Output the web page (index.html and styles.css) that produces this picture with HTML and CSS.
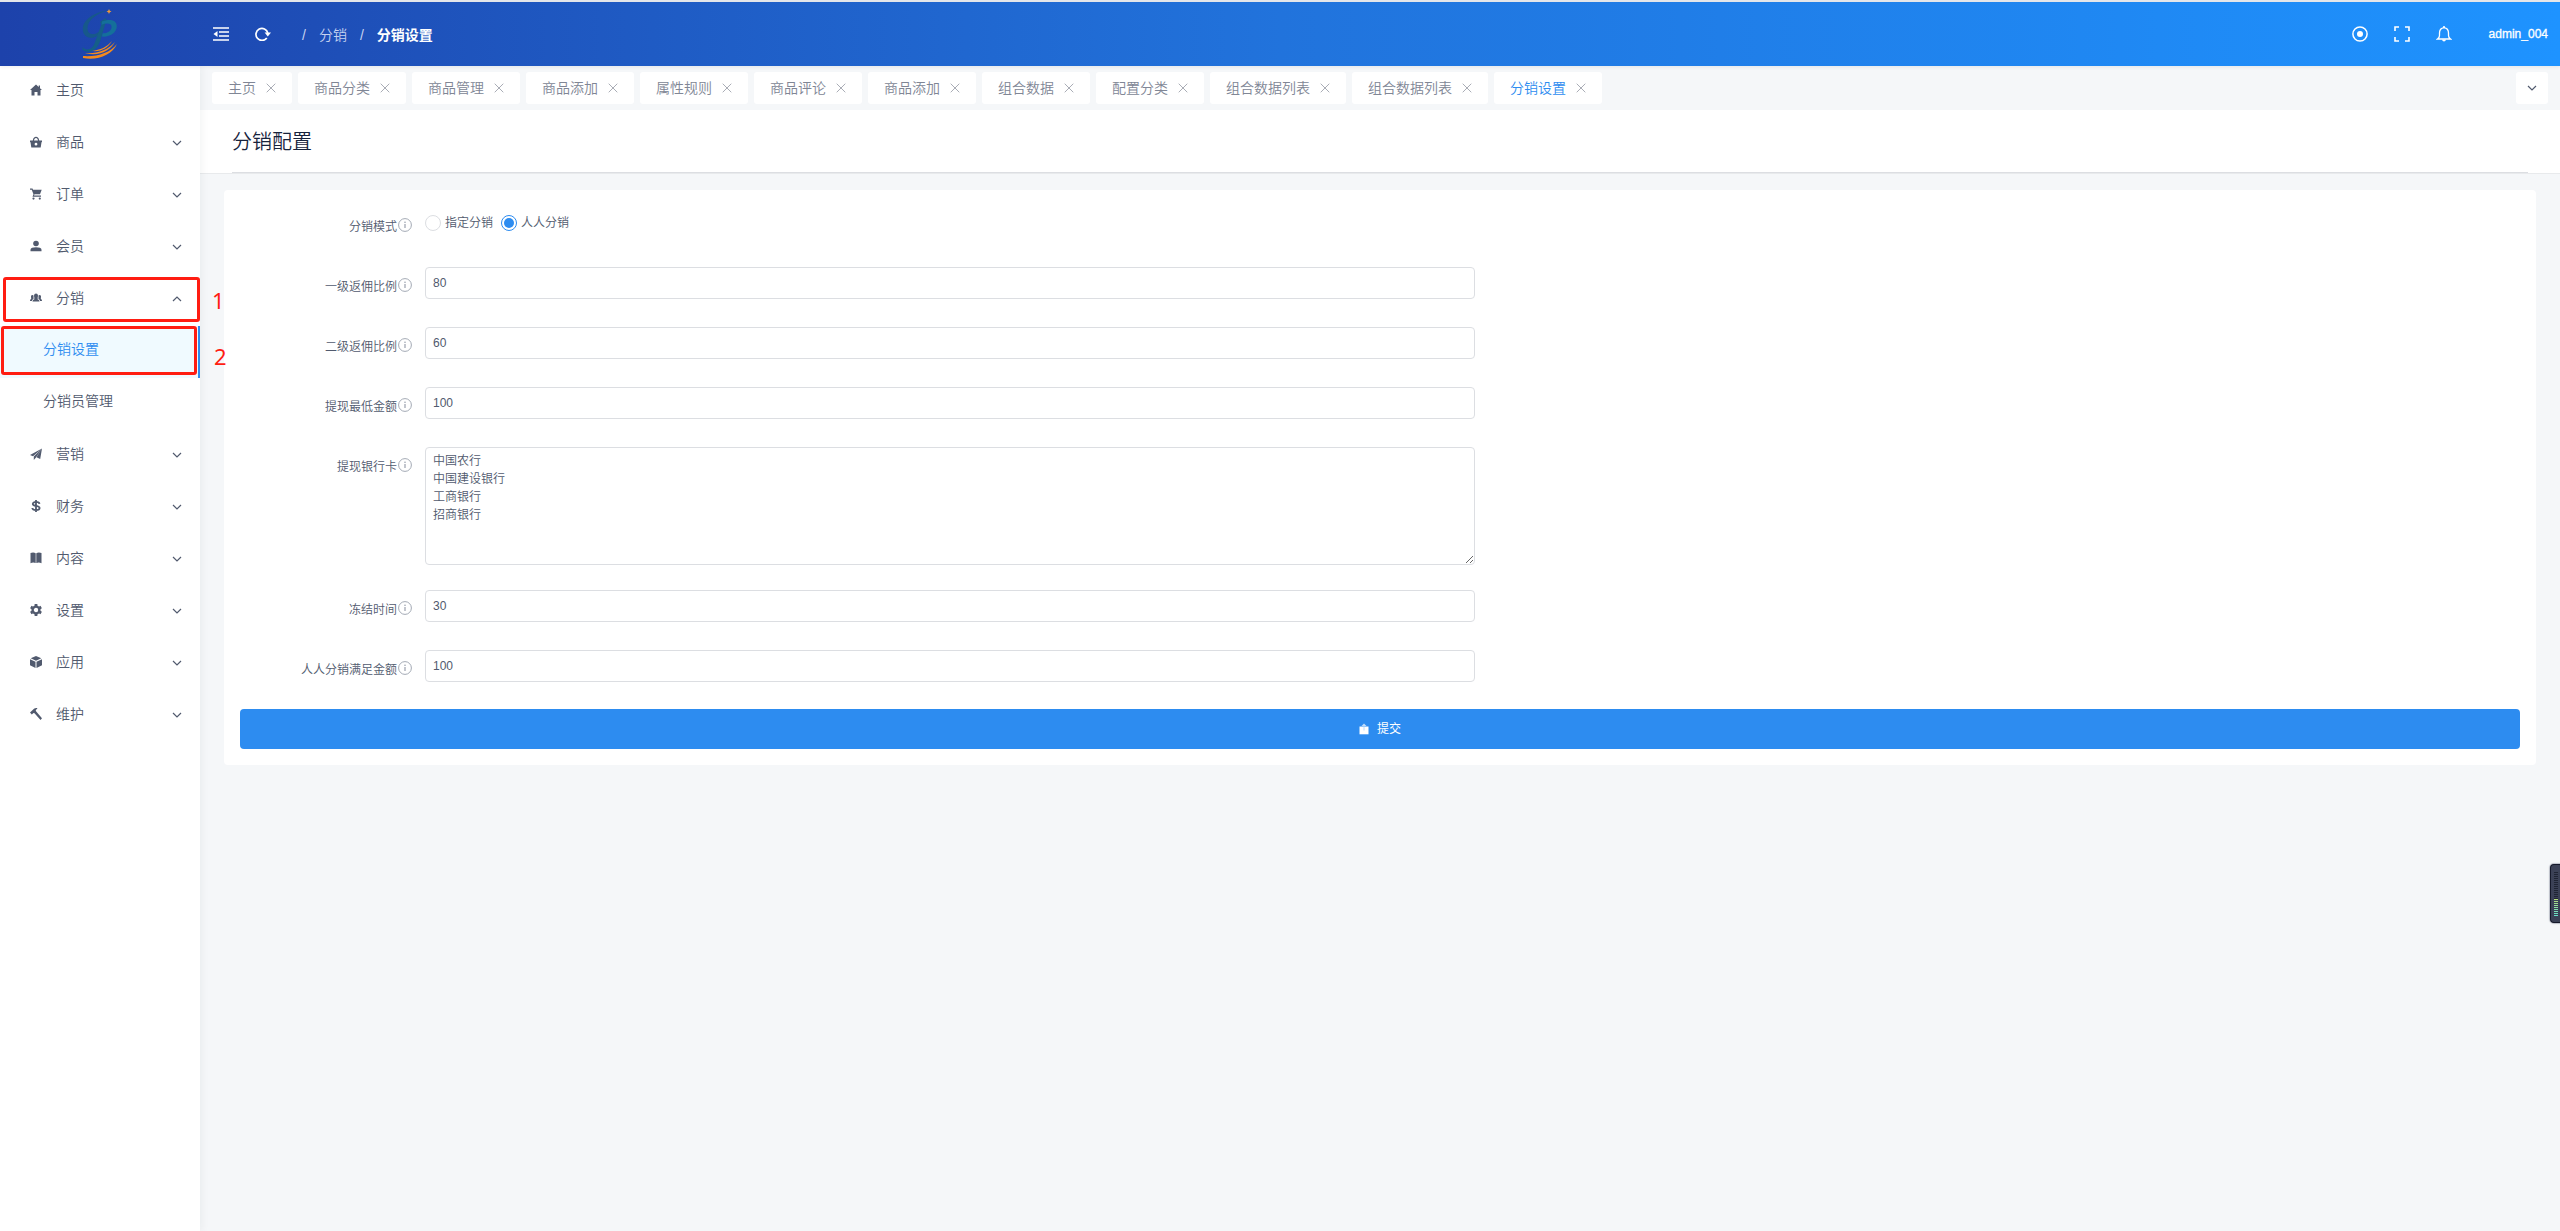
FILE: index.html
```html
<!DOCTYPE html>
<html lang="zh-CN">
<head>
<meta charset="utf-8">
<meta name="viewport" content="width=device-width, initial-scale=1">
<title>分销配置</title>
<link rel="stylesheet" href="styles.css">
</head>
<body>
<svg class="sprite" aria-hidden="true">
  <symbol id="down" viewBox="0 0 10 10"><path d="M1 3l4 4 4-4" fill="none" stroke="currentColor" stroke-width="1.2"/></symbol>
  <symbol id="up" viewBox="0 0 10 10"><path d="M1 7l4-4 4 4" fill="none" stroke="currentColor" stroke-width="1.2"/></symbol>
  <symbol id="close" viewBox="0 0 10 10"><path d="M.7.7l8.6 8.6M9.3.7L.7 9.3" fill="none" stroke="currentColor" stroke-width="1"/></symbol>
  <symbol id="info" viewBox="0 0 14 14"><circle cx="7" cy="7" r="6.4" fill="none" stroke="currentColor" stroke-width=".9"/><path d="M7 6v4" fill="none" stroke="currentColor" stroke-width="1.2"/><circle cx="7" cy="4.2" r=".8" fill="currentColor"/></symbol>
</svg>
<header class="header">
  <a class="logo" href="#" aria-label="首页">
    <svg width="36" height="50" viewBox="0 0 36 50">
      <path d="M26 1.500C12 3 .5 11 .8 20.500 1 29.500 11 31 16.500 26l.8-3.500C12.500 26.500 5.500 26 5.500 19.500 5.500 11.500 14 4.500 26 1.500z" fill="#17588a"/>
      <path d="M18 13l5.500-4c1.200 1 .8 2.500.3 4L18.500 31c-3 9.500-9 13-14.500 11.500-3-.8-4-2.500-3.500-4.500 2.500 3.500 9 4 12-3.500L19.500 15z" fill="#155f88"/>
      <path d="M20 12.500c6-2.500 14.500-2.500 14.800 4.500.2 7-8 11.500-15 10.500l1-3.200c5.500.2 9-3.300 8.800-6.800-.2-3.500-5.100-3.500-10.100-1.800z" fill="#14709a"/>
      <path d="M27 0l.8 1.700 1.700.8-1.700.8L27 5l-.8-1.700-1.700-.8 1.700-.8z" fill="#f09a3a"/>
      <path d="M3 44c12 1 23-3 30-11-5 9-17 15-30 11zM1 47c14 1 27-3 34-12-5 11-20 17-34 14zM10 42c8-1 15-4 20-10-4 7-11 11-20 10z" fill="#f28a1e"/>
    </svg>
  </a>
  <button class="head-btn" type="button" aria-label="折叠菜单"><svg width="16" height="14" viewBox="0 0 16 14"><path d="M0 1h16M6 5h10M6 9h10M0 13h16" stroke="currentColor" stroke-width="1.6"/><path d="M4.5 4v6L.5 7z" fill="currentColor"/></svg></button>
  <button class="head-btn" type="button" aria-label="刷新"><svg width="16" height="14" viewBox="0 0 16 14"><path d="M11.800 11A6 6 0 1 1 12.800 6" fill="none" stroke="currentColor" stroke-width="1.7"/><path d="M9.600 5.500h6.400l-3.200 4z" fill="currentColor"/></svg></button>
  <nav class="crumbs" aria-label="面包屑"><span>/</span><a href="#">分销</a><span>/</span><strong>分销设置</strong></nav>
  <div class="head-right">
    <button class="head-btn" type="button" aria-label="主题"><svg width="16" height="16" viewBox="0 0 16 16"><circle cx="8" cy="8" r="7.1" fill="none" stroke="currentColor" stroke-width="1.5"/><circle cx="8" cy="8" r="3" fill="currentColor"/></svg></button>
    <button class="head-btn" type="button" aria-label="全屏"><svg width="16" height="16" viewBox="0 0 16 16"><path d="M1 5V1h4M11 1h4v4M15 11v4h-4M5 15H1v-4" fill="none" stroke="currentColor" stroke-width="1.6"/></svg></button>
    <button class="head-btn" type="button" aria-label="通知"><svg width="16" height="16" viewBox="0 0 16 16"><path d="M1.500 13h13c-1.400-1-2-2-2-3.500V7c0-3-1.700-5-4.500-5.400C5.200 2 3.500 4 3.500 7v2.500c0 1.500-.6 2.500-2 3.500z" fill="none" stroke="currentColor" stroke-width="1.300"/><path d="M6 13.500c.4 2.500 3.600 2.500 4 0zM7.200 0h1.600v2H7.200z" fill="currentColor"/></svg></button>
    <a class="user" href="#">admin_004</a>
  </div>
</header>
<div class="layout">
  <aside class="side">
    <ul class="menu">
      <li><a class="item" href="#"><svg class="ico" viewBox="0 0 12 12"><path d="M6 .5L0 6h1.500v5.500h3V8h3v3.500h3V6H12L10 4.200V1.500H8.700V3z"/></svg>主页</a></li>
      <li><a class="item" href="#"><svg class="ico" viewBox="0 0 12 12"><path fill-rule="evenodd" d="M0 4.500h2.800C3 2 4.500.8 6 .8S9 2 9.200 4.500H12V6l-.5.3-.8 5.200H1.300L.5 6.300 0 6zM4 4.500h4C7.800 3 7 2 6 2S4.200 3 4 4.500zM6 6.800A1.400 1.400 0 1 0 6 9.600 1.400 1.400 0 1 0 6 6.800z"/></svg>商品<svg class="arrow"><use href="#down"/></svg></a></li>
      <li><a class="item" href="#"><svg class="ico" viewBox="0 0 12 12"><path d="M0 .5h2.500L3 1.700h8.700L10 6.300H4.500L4 7.500h7v1.200H2.500l1-2.400L1.700 1.700H0z"/><circle cx="3.500" cy="10.600" r="1.100"/><circle cx="9.800" cy="10.600" r="1.100"/></svg>订单<svg class="arrow"><use href="#down"/></svg></a></li>
      <li><a class="item" href="#"><svg class="ico" viewBox="0 0 12 12"><circle cx="6" cy="3.500" r="2.800"/><path d="M.5 11.300V9.800C.5 8 3 7.300 6 7.300s5.500.7 5.500 2.500v1.500z"/></svg>会员<svg class="arrow"><use href="#down"/></svg></a></li>
      <li>
        <a class="item" href="#"><svg class="ico" viewBox="0 0 12 12"><circle cx="6" cy="3.400" r="1.900"/><path d="M4.300 3.500h3.400v4c1.200.3 1.800.8 1.800 2H2.500c0-1.200.6-1.700 1.800-2z"/><path d="M1 4c.5-1.300 2-1.300 2.500-.5V7C2.500 7.500 2 8 1.900 9H0c0-1 .3-1.700 1.200-2zM11 4c-.5-1.300-2-1.300-2.500-.5V7c1 .5 1.500 1 1.600 2H12c0-1-.3-1.700-1.200-2z"/></svg>分销<svg class="arrow"><use href="#up"/></svg><span class="mark mark-first"></span><span class="num num-first">1</span></a>
        <ul class="menu">
          <li><a class="item sub active" href="#">分销设置<span class="mark mark-second"></span><span class="num num-second">2</span></a></li>
          <li><a class="item sub" href="#">分销员管理</a></li>
        </ul>
      </li>
      <li><a class="item" href="#"><svg class="ico" viewBox="0 0 12 12"><path d="M12 .5L0 7l3 1.200zM12 .5L3.800 8.600V12l2-2.300zM12 .5L6.500 9.200l3.700 1.700z"/></svg>营销<svg class="arrow"><use href="#down"/></svg></a></li>
      <li><a class="item" href="#"><svg class="ico" viewBox="0 0 12 12"><path d="M9.500 3.800C9.300 2.500 7.800 1.900 6 1.900s-3.200.7-3.200 2C2.800 6.700 9.600 5 9.600 8.100c0 1.400-1.600 2.100-3.600 2.100S2.500 9.500 2.300 8M6 0v12" fill="none" stroke="currentColor" stroke-width="1.800"/></svg>财务<svg class="arrow"><use href="#down"/></svg></a></li>
      <li><a class="item" href="#"><svg class="ico" viewBox="0 0 12 12"><path d="M.5 1C2.300.2 4.300.3 5.700 1.200v9.900C4 10.200 2.300 10.300.5 11.200zM6.300 1.200C7.700.3 9.700.2 11.500 1v10.200c-1.800-.9-3.500-1-5.200-.1z"/></svg>内容<svg class="arrow"><use href="#down"/></svg></a></li>
      <li><a class="item" href="#"><svg class="ico" viewBox="0 0 12 12"><circle cx="6" cy="6" r="3.400" fill="none" stroke="currentColor" stroke-width="2.400"/><path d="M6 0v2M6 10v2M.8 3l1.700 1M9.500 8l1.700 1M.8 9l1.700-1M9.500 4l1.700-1" stroke="currentColor" stroke-width="2.800"/></svg>设置<svg class="arrow"><use href="#down"/></svg></a></li>
      <li><a class="item" href="#"><svg class="ico" viewBox="0 0 12 12"><path d="M6 0l5.300 2.300L6 4.800.7 2.300zM0 3.300l5.500 2.500V12L0 9.200zM12 3.300L6.500 5.800V12L12 9.200z"/></svg>应用<svg class="arrow"><use href="#down"/></svg></a></li>
      <li><a class="item" href="#"><svg class="ico" viewBox="0 0 12 12"><path d="M0 4.500L4 .8C5 0 6.500 0 7.500.3L5.700 2.200l.5 1.300L12 10.300 10.500 12 4.500 5.300l-1-.3-1.700 1.500z"/></svg>维护<svg class="arrow"><use href="#down"/></svg></a></li>
    </ul>
  </aside>
  <main class="main">
    <div class="tabs">
      <div class="tab"><a href="#">主页</a><button type="button" aria-label="关闭"><svg><use href="#close"/></svg></button></div>
      <div class="tab"><a href="#">商品分类</a><button type="button" aria-label="关闭"><svg><use href="#close"/></svg></button></div>
      <div class="tab"><a href="#">商品管理</a><button type="button" aria-label="关闭"><svg><use href="#close"/></svg></button></div>
      <div class="tab"><a href="#">商品添加</a><button type="button" aria-label="关闭"><svg><use href="#close"/></svg></button></div>
      <div class="tab"><a href="#">属性规则</a><button type="button" aria-label="关闭"><svg><use href="#close"/></svg></button></div>
      <div class="tab"><a href="#">商品评论</a><button type="button" aria-label="关闭"><svg><use href="#close"/></svg></button></div>
      <div class="tab"><a href="#">商品添加</a><button type="button" aria-label="关闭"><svg><use href="#close"/></svg></button></div>
      <div class="tab"><a href="#">组合数据</a><button type="button" aria-label="关闭"><svg><use href="#close"/></svg></button></div>
      <div class="tab"><a href="#">配置分类</a><button type="button" aria-label="关闭"><svg><use href="#close"/></svg></button></div>
      <div class="tab"><a href="#">组合数据列表</a><button type="button" aria-label="关闭"><svg><use href="#close"/></svg></button></div>
      <div class="tab"><a href="#">组合数据列表</a><button type="button" aria-label="关闭"><svg><use href="#close"/></svg></button></div>
      <div class="tab current"><a href="#">分销设置</a><button type="button" aria-label="关闭"><svg><use href="#close"/></svg></button></div>
      <button class="tabs-more" type="button" aria-label="更多"><svg class="arrow"><use href="#down"/></svg></button>
    </div>
    <div class="page-head"><h1>分销配置</h1></div>
    <form class="card">
      <div class="fields">
        <div class="rows">
          <div class="row" role="radiogroup" aria-labelledby="mode">
            <span class="label" id="mode">分销模式<svg><use href="#info"/></svg></span>
            <div class="radios">
              <label><input type="radio" name="mode">指定分销</label>
              <label><input type="radio" name="mode" checked>人人分销</label>
            </div>
          </div>
          <div class="row"><label class="label" for="f1">一级返佣比例<svg><use href="#info"/></svg></label><input class="field" id="f1" type="text" value="80"></div>
          <div class="row"><label class="label" for="f2">二级返佣比例<svg><use href="#info"/></svg></label><input class="field" id="f2" type="text" value="60"></div>
          <div class="row"><label class="label" for="f3">提现最低金额<svg><use href="#info"/></svg></label><input class="field" id="f3" type="text" value="100"></div>
          <div class="row row-area"><label class="label" for="f4">提现银行卡<svg><use href="#info"/></svg></label><textarea class="field" id="f4">中国农行
中国建设银行
工商银行
招商银行</textarea></div>
          <div class="row"><label class="label" for="f5">冻结时间<svg><use href="#info"/></svg></label><input class="field" id="f5" type="text" value="30"></div>
          <div class="row"><label class="label" for="f6">人人分销满足金额<svg><use href="#info"/></svg></label><input class="field" id="f6" type="text" value="100"></div>
        </div>
      </div>
      <button class="submit" type="button"><svg width="10" height="12" viewBox="0 0 10 12"><path d="M.5 3.500h9v7.800h-9z" fill="currentColor"/><path d="M2.500 3L5 .5 7.500 3z" fill="currentColor" opacity=".7"/><path d="M5 3.500v4" stroke="#bcdcfb"/></svg>提交</button>
    </form>
  </main>
</div>
<div class="meter"><span class="meter-off"></span><span class="meter-on"></span></div>
</body>
</html>
```
FILE: styles.css
```css
* { box-sizing: border-box; }
body {
  margin: 0;
  min-height: 100vh;
  display: flex;
  flex-direction: column;
  border-top: 2px solid #e4e6ea;
  background: #f5f7f9;
  color: #515a6e;
  font: 14px/24px "Liberation Sans", "Noto Sans CJK SC", sans-serif;
  font-weight: 350;
}
a { color: inherit; text-decoration: none; }
button { margin: 0; padding: 0; border: 0; background: none; color: inherit; font: inherit; cursor: pointer; }
svg { display: block; flex: none; }
.sprite { position: absolute; width: 0; height: 0; }

.header {
  position: relative;
  z-index: 3;
  display: flex;
  align-items: center;
  height: 64px;
  background: linear-gradient(90deg, #1d42ab, #2173dc, #1e93ff);
  box-shadow: 0 1px 4px rgba(0, 21, 41, .08);
  color: #fff;
}
.logo { width: 200px; display: flex; justify-content: center; }
.head-btn { width: 42px; height: 64px; display: flex; align-items: center; justify-content: center; }
.crumbs { display: flex; gap: 13px; margin-left: 18px; padding-top: 2px; color: #c6d3f0; }
.crumbs strong { color: #fff; font-weight: 700; }
.head-right { display: flex; align-items: center; margin-left: auto; padding-right: 12px; }
.user { margin-left: 24px; font-size: 12px; -webkit-text-stroke: 0.3px #fff; }

.layout { flex: 1; display: flex; }
.side { position: relative; z-index: 2; width: 200px; flex: none; background: #fff; box-shadow: 2px 0 8px rgba(29, 35, 41, .05); }
.menu { margin: 0; padding: 0; list-style: none; }
.item { position: relative; display: flex; height: 52px; padding: 12px 18px 16px 30px; }
.ico { width: 12px; height: 12px; margin: 6px 14px 0 0; fill: currentColor; }
.arrow { width: 10px; height: 10px; }
.item .arrow { margin: 8px 0 0 auto; }
.sub { padding-top: 11px; padding-left: 43px; }
.active { background: #f0faff; color: #2d8cf0; border-right: 2px solid #2d8cf0; }
.mark { position: absolute; border: 3px solid #ff1d12; border-radius: 3px; }
.mark-first { inset: 3px 0 4px 3px; }
.mark-second { inset: 0 1px 3px 1px; }
.num { position: absolute; color: #ff1d12; font: 22px/24px "Noto Sans", sans-serif; }
.num-first { left: 212px; top: 14px; }
.num-second { left: 214px; top: 18px; }

.main { flex: 1; min-width: 0; }
.tabs { display: flex; gap: 6px; padding: 6px 12px; }
.tab { display: flex; align-items: center; gap: 10px; height: 32px; padding: 0 16px; border-radius: 3px; background: #fff; color: #808695; white-space: nowrap; }
.tab button { color: #a9adb6; }
.tab svg { width: 10px; height: 10px; }
.current a { color: #2d8cf0; }
.tabs-more { width: 32px; height: 32px; margin-left: auto; display: flex; align-items: center; justify-content: center; border-radius: 3px; background: #fff; }
.page-head { padding: 16px 32px 0; background: #fff; border-bottom: 1px solid #e8eaec; }
.page-head h1 { margin: 0; padding-bottom: 14px; border-bottom: 1px solid #dcdee2; color: #17233d; font-size: 20px; font-weight: 350; line-height: 32px; }

.card { margin: 16px 24px 24px; padding: 17px 16px 16px; border-radius: 4px; background: #fff; font-size: 12px; }
.fields { display: grid; grid-template-columns: 13fr 11fr; }
.rows { display: flex; flex-direction: column; }
.row { display: flex; margin-bottom: 28px; }
.row-area { margin-bottom: 25px; }
.row:last-child { margin-bottom: 27px; }
.label { width: 185px; flex: none; display: flex; justify-content: flex-end; padding: 8px 13px 0 0; }
.label svg { width: 14px; height: 14px; margin: 3px 0 0 1px; color: #9aa0ad; }
.radios { display: flex; gap: 8px; height: 32px; align-items: center; }
.radios label { display: flex; align-items: center; gap: 4px; }
.radios input { appearance: none; width: 16px; height: 16px; margin: 0; border: 1px solid #dcdee2; border-radius: 50%; background: #fff; }
.radios input:checked { padding: 2px; border-color: #2d8cf0; background: #2d8cf0 content-box; }
.field { flex: 1; min-width: 0; height: 32px; margin: 0; padding: 4px 7px; border: 1px solid #dcdee2; border-radius: 4px; background: #fff; color: #515a6e; font: inherit; line-height: 18px; }
textarea.field { height: 118px; resize: vertical; }
.submit { width: 100%; height: 40px; display: flex; align-items: center; justify-content: center; gap: 8px; border-radius: 4px; background: #2d8cf0; color: #fff; font-weight: 400; }

.meter { position: fixed; z-index: 4; right: 0; top: 864px; width: 10px; height: 59px; padding: 7px 2px 0 3px; border: 1px solid #15192a; border-right: 0; border-radius: 4px 0 0 4px; background: #3b4156; box-shadow: 0 0 1px 1px rgba(80, 88, 110, .35); }
.meter span { display: block; width: 4px; }
.meter-off { height: 27px; background: repeating-linear-gradient(#1f2433 0 1px, transparent 1px 2px); }
.meter-on { height: 18px; background: repeating-linear-gradient(transparent 0 1px, #3b4156 1px 2px), linear-gradient(#b5dc7c, #5fe0d0); }
```
